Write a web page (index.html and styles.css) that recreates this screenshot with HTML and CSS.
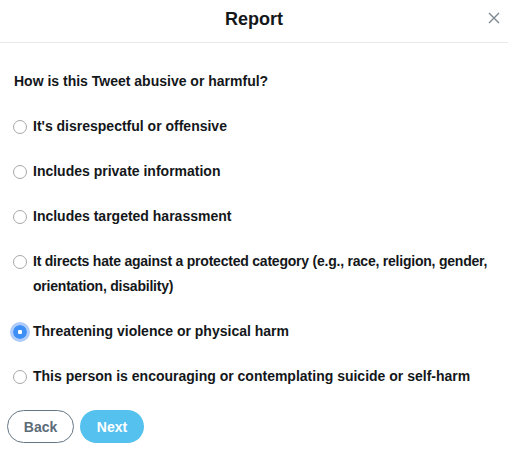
FILE: index.html
```html
<!DOCTYPE html>
<html>
<head>
<meta charset="utf-8">
<link rel="stylesheet" href="styles.css">
</head>
<body>
<div class="dialog">
  <div class="header">
    <h1 class="title">Report</h1>
    <button class="close" aria-label="Close">
      <svg width="12" height="12" viewBox="0 0 12 12"><path d="M1 1 L11 11 M11 1 L1 11" stroke="#7b8791" stroke-width="1.4" fill="none"/></svg>
    </button>
  </div>
  <div class="body">
    <p class="question">How is this Tweet abusive or harmful?</p>
    <ul class="options">
      <li class="option"><span class="radio"></span><span class="label">It's disrespectful or offensive</span></li>
      <li class="option"><span class="radio"></span><span class="label">Includes private information</span></li>
      <li class="option"><span class="radio"></span><span class="label">Includes targeted harassment</span></li>
      <li class="option"><span class="radio"></span><span class="label tight">It directs hate against a protected category (e.g., race, religion, gender, orientation, disability)</span></li>
      <li class="option"><span class="radio checked"></span><span class="label">Threatening violence or physical harm</span></li>
      <li class="option"><span class="radio"></span><span class="label">This person is encouraging or contemplating suicide or self-harm</span></li>
    </ul>
    <div class="actions">
      <button class="btn back">Back</button>
      <button class="btn next">Next</button>
    </div>
  </div>
</div>
</body>
</html>
```
FILE: styles.css
```css
* { box-sizing: border-box; }
html, body { margin: 0; padding: 0; background: #fff; }
body {
  font-family: "Liberation Sans", Arial, sans-serif;
  color: #14171a;
  width: 508px;
  height: 451px;
  overflow: hidden;
}
.header {
  position: relative;
  height: 43px;
  border-bottom: 1px solid #e6e8ea;
  display: flex;
  align-items: center;
  justify-content: center;
}
.title {
  margin: 0;
  font-size: 18px;
  font-weight: bold;
  line-height: 36px;
  margin-top: -4px;
}
.close {
  position: absolute;
  right: 8px;
  top: 12px;
  border: 0;
  background: none;
  padding: 0;
  width: 12px;
  height: 12px;
  display: flex;
}
.body {
  padding: 26px 6px 0 13px;
}
.question {
  margin: 0 0 0 1px;
  font-size: 14px;
  font-weight: bold;
  line-height: 24px;
}
.options {
  list-style: none;
  margin: 21px 0 0 0;
  padding: 0;
  display: flex;
  flex-direction: column;
  gap: 20px;
}
.option {
  display: flex;
  align-items: flex-start;
  font-size: 14px;
  font-weight: bold;
  line-height: 25px;
}
.radio {
  flex: none;
  width: 14px;
  height: 14px;
  margin-top: 6px;
  margin-right: 6px;
  border-radius: 50%;
  border: 1px solid #a8a8a8;
  background: #fff;
}
.radio.checked {
  border: 0;
  background: radial-gradient(circle, #fff 0 2px, #3d8ff6 2.5px);
  box-shadow: 0 0 0 3px rgba(80, 140, 240, 0.45);
}
.label { display: block; }
.label.tight { letter-spacing: -0.22px; }
.actions {
  display: flex;
  gap: 6px;
  margin-top: 21px;
  margin-left: -6px;
}
.btn {
  height: 33px;
  border-radius: 100px;
  font-family: "Liberation Sans", Arial, sans-serif;
  font-size: 14px;
  font-weight: bold;
  padding: 0;
}
.back {
  width: 67px;
  border: 1px solid #657786;
  background: #fff;
  color: #5c6b78;
}
.next {
  width: 64px;
  border: 0;
  background: #55c1ef;
  color: #fff;
}
```
